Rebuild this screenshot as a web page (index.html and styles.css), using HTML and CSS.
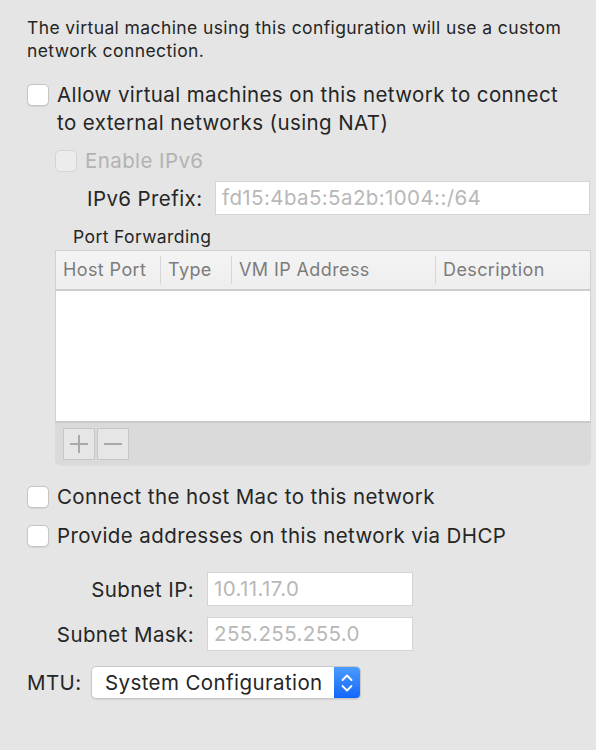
FILE: index.html
```html
<!DOCTYPE html>
<html>
<head>
<meta charset="utf-8">
<link rel="stylesheet" href="styles.css">
</head>
<body>
<div class="panel">
  <p class="intro">The virtual machine using this configuration will use a custom network connection.</p>

  <div class="check-row nat">
    <span class="box"></span>
    <span class="label">Allow virtual machines on this network to connect to external networks (using NAT)</span>
  </div>

  <div class="check-row ipv6 disabled">
    <span class="box"></span>
    <span class="label">Enable IPv6</span>
  </div>

  <div class="field-row prefix">
    <span class="field-label">IPv6 Prefix:</span>
    <span class="input wide">fd15:4ba5:5a2b:1004::/64</span>
  </div>

  <div class="section-title">Port Forwarding</div>

  <div class="table">
    <div class="thead">
      <div class="th c1">Host Port</div>
      <div class="th c2">Type</div>
      <div class="th c3">VM IP Address</div>
      <div class="th c4">Description</div>
    </div>
    <div class="tbody"></div>
    <div class="tfoot">
      <span class="tbtn">
        <svg width="20" height="20" viewBox="0 0 20 20"><path d="M10 1v18M1 10h18" stroke="#a9a9a9" stroke-width="2" fill="none"/></svg>
      </span>
      <span class="tbtn">
        <svg width="20" height="20" viewBox="0 0 20 20"><path d="M1 10h18" stroke="#a9a9a9" stroke-width="2" fill="none"/></svg>
      </span>
    </div>
  </div>

  <div class="check-row host">
    <span class="box"></span>
    <span class="label">Connect the host Mac to this network</span>
  </div>
  <div class="check-row dhcp">
    <span class="box"></span>
    <span class="label">Provide addresses on this network via DHCP</span>
  </div>

  <div class="subnet">
    <span class="field-label right">Subnet IP:</span>
    <span class="input narrow">10.11.17.0</span>
    <span class="field-label right">Subnet Mask:</span>
    <span class="input narrow">255.255.255.0</span>
  </div>

  <div class="mtu-row">
    <span class="field-label mtu-label">MTU:</span>
    <span class="popup">
      <span class="popup-text">System Configuration</span>
      <span class="popup-arrows">
        <svg width="14" height="24" viewBox="0 0 14 24"><path d="M2.5 9 7 4.5 11.5 9M2.5 15 7 19.5 11.5 15" stroke="#fff" stroke-width="1.8" fill="none" stroke-linecap="round" stroke-linejoin="round"/></svg>
      </span>
    </span>
  </div>
</div>
</body>
</html>
```

FILE: styles.css
```css
html, body {
  margin: 0;
  padding: 0;
  background: #e5e5e5;
}
body {
  font-family: Inter, "Liberation Sans", Arial, sans-serif;
  color: #262626;
  width: 596px;
  height: 750px;
  overflow: hidden;
}
.panel {
  padding: 16px 0 0 0;
}
.intro {
  margin: 0 0 0 27px;
  width: 545px;
  font-size: 17.5px;
  letter-spacing: 0.4px;
  line-height: 23px;
}
.check-row {
  display: flex;
  align-items: flex-start;
  font-size: 20.5px;
  letter-spacing: 0.4px;
  line-height: 28px;
}
.box {
  flex: none;
  width: 22px;
  height: 22px;
  box-sizing: border-box;
  border: 1px solid #c6c6c6;
  border-radius: 5px;
  background: #fff;
  margin-top: 3px;
  margin-right: 8px;
  box-shadow: 0 0.5px 1px rgba(0,0,0,0.08);
}
.nat {
  margin: 19px 0 0 27px;
  width: 540px;
}
.ipv6 {
  margin: 10px 0 0 55px;
}
.disabled .label { color: #b3b3b3; }
.disabled .box { background: #ececec; border-color: #d4d4d4; box-shadow: none; }
.field-row {
  display: flex;
  align-items: center;
}
.prefix {
  margin: 6px 0 0 87px;
}
.field-label {
  font-size: 20.5px;
  letter-spacing: 0.4px;
}
.input {
  box-sizing: border-box;
  height: 34px;
  background: #fff;
  border: 1px solid #d4d4d4;
  color: #b8b8b8;
  font-size: 20.5px;
  letter-spacing: 0.4px;
  line-height: 32px;
  padding-left: 6px;
}
.input.wide {
  width: 375px;
  margin-left: auto;
  margin-right: 6px;
}
.section-title {
  margin: 12px 0 0 73px;
  font-size: 17.5px;
  letter-spacing: 0.4px;
  line-height: 20px;
}
.table {
  margin: 3px 0 0 55px;
  width: 536px;
}
.thead {
  display: flex;
  height: 41px;
  box-sizing: border-box;
  background: linear-gradient(#f4f4f4, #eeeeee);
  border: 1px solid #d0d0d0;
  border-bottom: 2px solid #cdcdcd;
  align-items: center;
}
.th {
  font-size: 18px;
  letter-spacing: 0.4px;
  color: #7c7c7c;
  box-sizing: border-box;
  padding-left: 7px;
  height: 28px;
  line-height: 28px;
  border-right: 1px solid #d6d6d6;
}
.c1 { width: 105px; }
.c2 { width: 71px; }
.c3 { width: 204px; }
.c4 { flex: 1; border-right: none; }
.tbody {
  height: 130px;
  background: #fff;
  border-left: 1px solid #d0d0d0;
  border-right: 1px solid #d0d0d0;
  border-bottom: 2px solid #c9c9c9;
}
.tfoot {
  height: 42px;
  background: #dadada;
  border-radius: 0 0 6px 6px;
  display: flex;
  align-items: center;
  padding-left: 8px;
  gap: 2px;
  box-shadow: 0 0.5px 0.5px rgba(0,0,0,0.06);
}
.tbtn {
  width: 32px;
  height: 32px;
  box-sizing: border-box;
  background: #e6e6e6;
  border: 1px solid #c6c6c6;
  display: flex;
  align-items: center;
  justify-content: center;
}
.host {
  margin: 18px 0 0 27px;
}
.dhcp {
  margin: 11px 0 0 27px;
}
.subnet {
  margin: 22px 0 0 0;
  display: grid;
  grid-template-columns: 194px 206px;
  column-gap: 13px;
  row-gap: 11px;
  align-items: center;
}
.field-label.right {
  text-align: right;
}
.input.narrow {
  width: 206px;
}
.mtu-row {
  margin: 15px 0 0 27px;
  display: flex;
  align-items: center;
}
.mtu-label {
  width: 64px;
}
.popup {
  width: 270px;
  height: 33px;
  box-sizing: border-box;
  display: flex;
  background: #fff;
  border: 1px solid #c8c8c8;
  border-radius: 5px;
  box-shadow: 0 1px 1px rgba(0,0,0,0.08);
  overflow: hidden;
}
.popup-text {
  flex: 1;
  font-size: 20.5px;
  letter-spacing: 0.4px;
  line-height: 31px;
  padding-left: 13px;
}
.popup-arrows {
  width: 26px;
  background: linear-gradient(#4c9cfb, #1266fb);
  display: flex;
  align-items: center;
  justify-content: center;
}
```
